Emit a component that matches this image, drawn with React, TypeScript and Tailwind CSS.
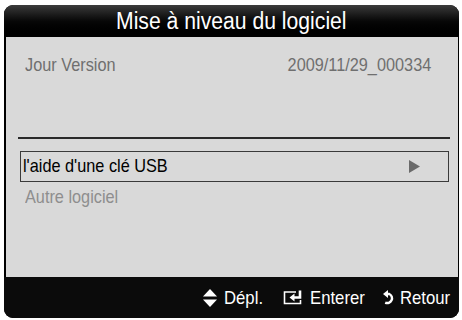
import React from "react";

function UpDown() {
  return (
    <svg width="14" height="18" viewBox="0 0 14 18" className="block">
      <polygon points="7,0 14,7.5 0,7.5" fill="#fff" />
      <polygon points="0,10.5 14,10.5 7,18" fill="#fff" />
    </svg>
  );
}

function EnterIcon() {
  return (
    <svg width="21" height="15" viewBox="0 0 21 15" className="block">
      <path d="M13 2 H1.5 V13.5 H17.5 V10" fill="none" stroke="#fff" strokeWidth="1.6" />
      <path d="M17 0.5 V7.5 H10" fill="none" stroke="#fff" strokeWidth="2.6" />
      <polygon points="6.5,7.5 11.5,3.5 11.5,11.5" fill="#fff" />
    </svg>
  );
}

function ReturnIcon() {
  return (
    <svg width="12" height="15" viewBox="0 0 12 15" className="block">
      <path d="M4 4 H6.3 A4.3 4.3 0 1 1 2.2 12.6" fill="none" stroke="#fff" strokeWidth="2.4" />
      <polygon points="0,4 5,0 5,8" fill="#fff" />
    </svg>
  );
}

export default function App() {
  return (
    <div
      className="w-[462px] h-[320px] bg-white pt-[5px] pl-[4px]"
      style={{ fontFamily: '"Liberation Sans", Arial, sans-serif' }}
    >
      <div className="w-[455px] h-[313px] rounded-[9px] bg-black flex flex-col overflow-hidden">
        <div className="h-[32px] shrink-0 bg-gradient-to-b from-[#3c3c3c] via-[#080808] to-black flex items-center justify-center">
          <span className="inline-block text-white text-[23px] leading-none scale-x-[0.92]">Mise à niveau du logiciel</span>
        </div>
        <div className="h-[240px] shrink-0 bg-[#d9d9d9] ml-[2px] mr-[1px] flex flex-col">
          <div className="flex justify-between items-center pl-[19px] pr-[27px] pt-[18px] h-[38px] text-[18.5px] text-[#6f6f6f] leading-none">
            <span className="inline-block origin-left scale-x-[0.88]">Jour Version</span>
            <span className="inline-block origin-right scale-x-[0.88]">2009/11/29_000334</span>
          </div>
          <div className="mt-[62px] ml-[12px] mr-[8px] h-[1.5px] bg-[#2a2a2a]" />
          <div className="mt-[12px] ml-[14px] mr-[9px] h-[31px] border-[1.5px] border-[#3a3a3a] flex items-center justify-between pl-[2px] pr-[28px]">
            <span className="inline-block origin-left scale-x-[0.88] text-[18.5px] text-black leading-none">l'aide d'une clé USB</span>
            <svg width="11" height="13" viewBox="0 0 11 13" className="block">
              <polygon points="0,0 11,6.5 0,13" fill="#6a6a6a" />
            </svg>
          </div>
          <div className="mt-[6px] pl-[19px] text-[18.5px] text-[#8e8e8e] leading-none">
            <span className="inline-block origin-left scale-x-[0.88]">Autre logiciel</span>
          </div>
        </div>
        <div className="flex-1 bg-[#0b0b0b] flex items-center justify-end pr-[7px] text-white text-[19px] leading-none">
          <UpDown />
          <span className="ml-[7px] w-[38px] whitespace-nowrap">
            <span className="inline-block origin-left scale-x-[0.88]">Dépl.</span>
          </span>
          <span className="ml-[21px]"><EnterIcon /></span>
          <span className="ml-[6px] w-[54px] whitespace-nowrap">
            <span className="inline-block origin-left scale-x-[0.88]">Enterer</span>
          </span>
          <span className="ml-[19px]"><ReturnIcon /></span>
          <span className="ml-[5px] w-[52px] whitespace-nowrap">
            <span className="inline-block origin-left scale-x-[0.88]">Retour</span>
          </span>
        </div>
      </div>
    </div>
  );
}
